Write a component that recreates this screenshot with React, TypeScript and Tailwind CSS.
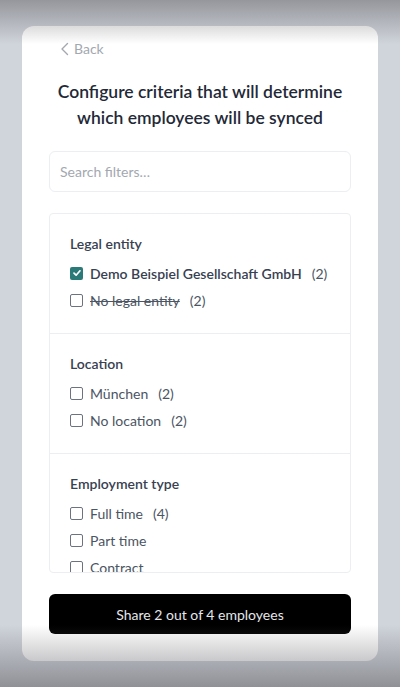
import React from "react";

const sections = [
  {
    title: "Legal entity",
    items: [
      { label: "Demo Beispiel Gesellschaft GmbH", count: "(2)", checked: true, bold: true },
      { label: "No legal entity", count: "(2)", strike: true },
    ],
  },
  {
    title: "Location",
    items: [
      { label: "München", count: "(2)" },
      { label: "No location", count: "(2)" },
    ],
  },
  {
    title: "Employment type",
    items: [
      { label: "Full time", count: "(4)" },
      { label: "Part time" },
      { label: "Contract" },
    ],
  },
];

type Item = { label: string; count?: string; checked?: boolean; bold?: boolean; strike?: boolean };

function Checkbox({ checked }: { checked?: boolean }) {
  if (checked) {
    return (
      <span className="flex h-[13px] w-[13px] shrink-0 items-center justify-center rounded-[2px] bg-[#2b7a78]">
        <svg width="10" height="10" viewBox="0 0 10 10" fill="none">
          <path d="M2 5.2 L4.1 7.2 L8 2.8" stroke="white" strokeWidth="1.7" strokeLinecap="round" strokeLinejoin="round" />
        </svg>
      </span>
    );
  }
  return <span className="h-[13px] w-[13px] shrink-0 rounded-[2px] border-[1.5px] border-[#6b7280] bg-white" />;
}

export default function App() {
  return (
    <div
      className="relative flex h-[687px] w-[400px] justify-center overflow-hidden bg-[#d0d4db] pt-[26px]"
      style={{ fontFamily: 'Lato, "Noto Sans", sans-serif' }}
    >
      <div className="flex h-[635px] w-[356px] flex-col rounded-[12px] bg-white px-[27px]">
        <div className="mt-[12px] flex items-center gap-[4px] pl-[11px] text-[14px] text-[#a3a8b0]">
          <svg width="10" height="14" viewBox="0 0 10 14" fill="none">
            <path d="M7.5 1.5 L2 7 L7.5 12.5" stroke="#a3a8b0" strokeWidth="1.4" strokeLinecap="round" strokeLinejoin="round" />
          </svg>
          <span>Back</span>
        </div>
        <h1 className="mt-[20px] whitespace-nowrap text-center text-[17.5px] font-semibold leading-[26px] text-[#1f2937]">
          Configure criteria that will determine
          <br />
          which employees will be synced
        </h1>
        <div className="mt-[20px] flex h-[41px] items-center rounded-[6px] border border-[#eceef1] px-[10px] text-[14px] text-[#a3a8b0]">
          Search filters…
        </div>
        <div className="mt-[21px] h-[360px] overflow-hidden rounded-[4px] border border-[#eceef1]">
          {sections.map((s, i) => (
            <div key={s.title} className={`px-[20px] pb-[23px] pt-[19px] ${i > 0 ? "border-t border-[#eceef1]" : ""}`}>
              <div className="text-[14px] font-semibold leading-[22px] text-[#374151]">{s.title}</div>
              <div className="mt-[8px] flex flex-col gap-[7px]">
                {s.items.map((it: Item) => (
                  <div key={it.label} className="flex h-[20px] items-center gap-[7px] whitespace-nowrap text-[14px] text-[#4b5563]">
                    <Checkbox checked={it.checked} />
                    <span className={`${it.bold ? "font-semibold text-[#374151]" : ""} ${it.strike ? "line-through" : ""}`}>
                      {it.label}
                    </span>
                    {it.count && <span className="ml-[3px]">{it.count}</span>}
                  </div>
                ))}
              </div>
            </div>
          ))}
        </div>
        <div className="mt-[21px] flex h-[40px] items-center justify-center rounded-[6px] bg-black text-[14px] text-[#e5e7eb]">
          Share 2 out of 4 employees
        </div>
      </div>
      <div className="pointer-events-none absolute inset-x-0 top-0 h-[44px] bg-gradient-to-b from-[rgba(110,110,115,0.6)] to-transparent" />
      <div className="pointer-events-none absolute inset-x-0 bottom-0 h-[62px] bg-gradient-to-t from-[rgba(100,100,105,0.6)] to-transparent" />
    </div>
  );
}
